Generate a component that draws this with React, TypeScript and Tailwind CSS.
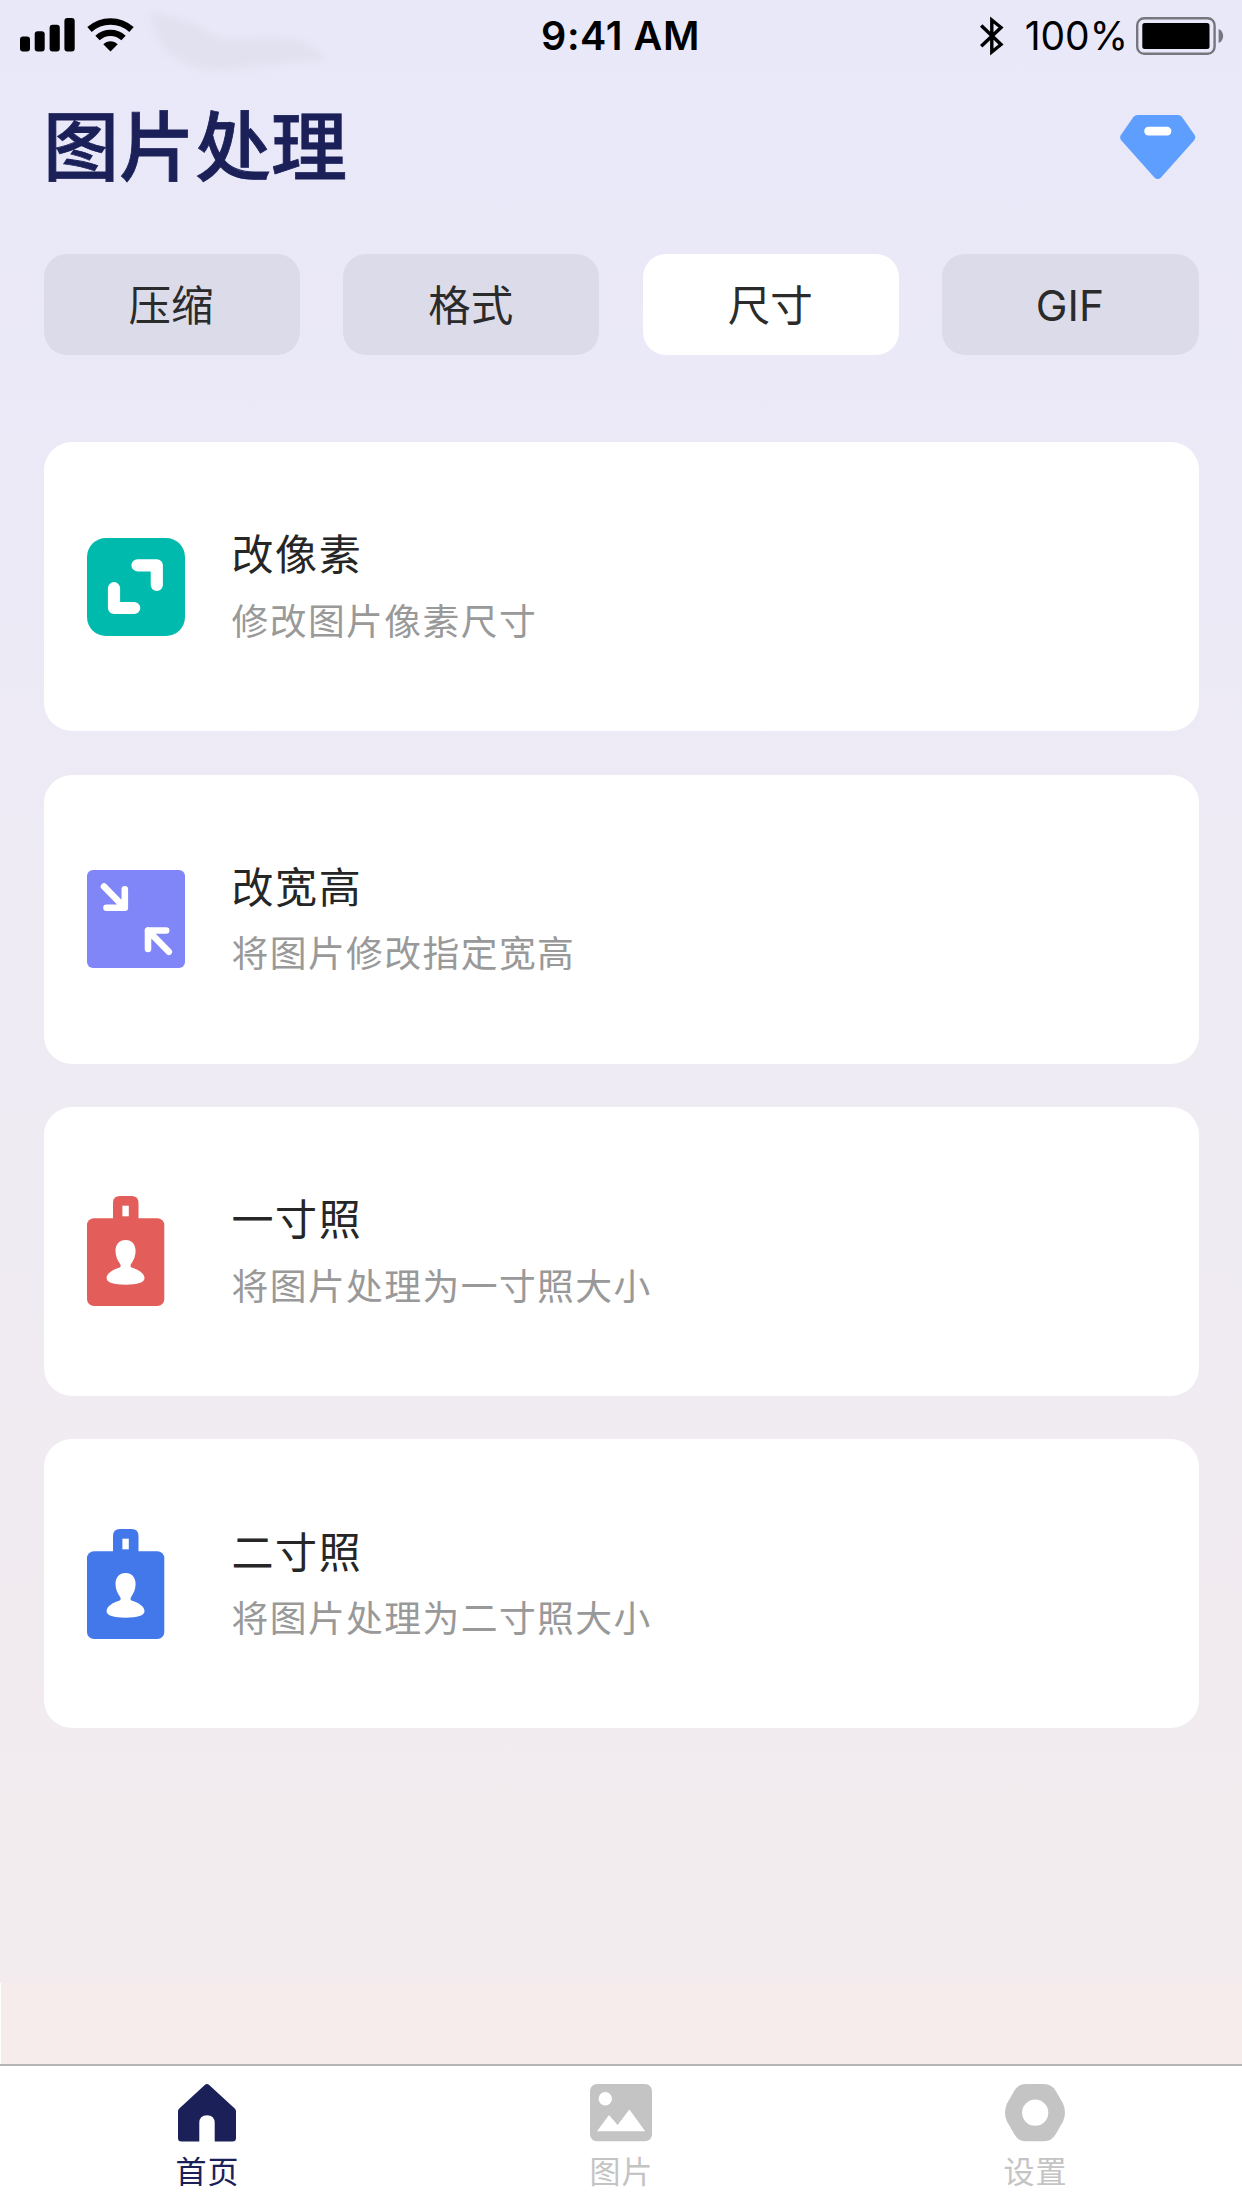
import React, { useState } from "react";
import clsx from "clsx";

//types
type ToolType = {
  id: number,
  title: string,
  description: string,
  icon: React.ReactNode,
}

type NavItemType = {
  label: string,
  icon: React.ReactNode,
}

const SignalIcon = () => (
  <svg width="55" height="34" viewBox="0 0 55 34">
    <rect x="0" y="18.5" width="10" height="15" rx="3" />
    <rect x="14.7" y="13.3" width="10" height="20.2" rx="3" />
    <rect x="29.6" y="6.8" width="10.2" height="26.7" rx="3" />
    <rect x="44.4" y="0" width="10.3" height="33.5" rx="3" />
  </svg>
);

const WifiIcon = () => (
  <svg width="47" height="34" viewBox="0 0 47 34">
    <path d="M2.5 11.5C14.5 0.8 32.5 0.8 44.5 11.5" fill="none" stroke="#000" strokeWidth="6.6" />
    <path d="M10.5 20C18 13.2 29 13.2 36.5 20" fill="none" stroke="#000" strokeWidth="6.4" />
    <path d="M16.3 26.2C20.4 22.3 26.6 22.3 30.7 26.2L23.5 33.6Z" />
  </svg>
);

const BluetoothIcon = () => (
  <svg width="24" height="40" viewBox="0 0 24 40" fill="none" stroke="#000" strokeWidth="3.4">
    <path d="M1.2 9.5L21 28.5L11.8 36V4L21 11.5L1.2 30.3" />
  </svg>
);

const BatteryIcon = () => (
  <svg width="88" height="38" viewBox="0 0 88 38">
    <rect x="1.2" y="1.2" width="77.4" height="35.6" rx="7" fill="none" stroke="#77767f" strokeWidth="2.4" />
    <rect x="6.3" y="6" width="67.2" height="26" rx="2.5" />
    <path d="M82.6 12C88.6 14 88.6 24 82.6 26Z" fill="#77767f" />
  </svg>
);

const DiamondIcon = () => (
  <svg width="76" height="65" viewBox="0 0 76 65">
    <path
      d="M17.5 0H58Q60.5 0 62 2L74.6 20Q76.2 22.8 74 25.6L41 62.4Q37.7 65.8 34.4 62.4L1.4 25.6Q-.8 22.8 .9 20L13.4 2Q15 0 17.5 0Z"
      fill="#5e9eff"
    />
    <rect x="24.2" y="11.8" width="27.2" height="8.6" rx="4.3" fill="#fff" />
  </svg>
);

const PixelIcon = () => (
  <svg width="98" height="98" viewBox="0 0 98 98">
    <rect width="98" height="98" rx="19" fill="#00baad" />
    <g fill="none" stroke="#fff" strokeWidth="12.2" strokeLinecap="round" strokeLinejoin="round">
      <path d="M50.5 27.3H69.8V47" />
      <path d="M27 50.2V70H47.2" />
    </g>
  </svg>
);

const ResizeIcon = () => (
  <svg width="98" height="98" viewBox="0 0 98 98">
    <rect width="98" height="98" rx="6" fill="#8085f7" />
    <g fill="none" stroke="#fff" strokeWidth="6.6" strokeLinecap="round" strokeLinejoin="round">
      <path d="M17 16.5L37.5 37.5M37.8 19.2V37.8H19.5" />
      <path d="M81.8 81.8L61 60.5M79.2 60.5H61V79" />
    </g>
  </svg>
);

const BadgeIcon = ({ color }: { color: string }) => (
  <svg width="78" height="110" viewBox="0 0 78 110">
    <rect y="22.3" width="77.3" height="87.7" rx="7" fill={color} />
    <path d="M26 26V7Q26 0 33 0H44.5Q51.5 0 51.5 7V26Z" fill={color} />
    <rect x="35.4" y="9.7" width="6.4" height="10.6" fill="#fff" />
    <path
      d="M38.6 44C45 44 48.6 48.5 48.6 55C48.6 60.5 46.5 64.5 44.4 67.5C43 69.6 43.2 71 45 71.7C51.5 73.5 57.5 77.5 57.5 82C57.5 86.7 50.5 88.7 38.6 88.7C26.7 88.7 19.6 86.7 19.6 82C19.6 77.5 25.7 73.5 32.2 71.7C34 71 34.2 69.6 32.8 67.5C30.7 64.5 28.5 60.5 28.5 55C28.5 48.5 32.2 44 38.6 44Z"
      fill="#fff"
    />
  </svg>
);

const HomeIcon = () => (
  <svg width="58" height="58" viewBox="0 0 58 58" fill="currentColor">
    <path d="M26.8 1Q29 -.8 31.2 1L57 24.8Q58 26 58 27.5V54Q58 57.5 54.5 57.5H36.7V39Q36.7 31.2 29 31.2Q21.3 31.2 21.3 39V57.5H3.5Q0 57.5 0 54V27.5Q0 26 1 24.8Z" />
  </svg>
);

const PictureIcon = () => (
  <svg width="62" height="58" viewBox="0 0 62 58">
    <rect width="62" height="57.3" rx="7" fill="currentColor" />
    <circle cx="15.3" cy="14.8" r="6.7" fill="#fff" />
    <path d="M7 47.2L19 31L27.6 41L39.4 25.5L55.2 47.2Z" fill="#fff" />
  </svg>
);

const SettingIcon = () => (
  <svg width="60" height="58" viewBox="0 0 60 58">
    <path
      d="M21 0H39Q46.5 0 50.5 6.5L58 19.5Q62 28.7 58 37.5L50.5 50.5Q46.5 57.3 39 57.3H21Q13.5 57.3 9.5 50.5L2 37.5Q-2 28.7 2 19.5L9.5 6.5Q13.5 0 21 0Z"
      fill="currentColor"
    />
    <circle cx="30.2" cy="28.7" r="13.1" fill="#fff" />
  </svg>
);

const tabs = ["压缩", "格式", "尺寸", "GIF"];

const tools: Array<ToolType> = [
  { id: 1, title: "改像素", description: "修改图片像素尺寸", icon: <PixelIcon /> },
  { id: 2, title: "改宽高", description: "将图片修改指定宽高", icon: <ResizeIcon /> },
  { id: 3, title: "一寸照", description: "将图片处理为一寸照大小", icon: <BadgeIcon color="#e35d5a" /> },
  { id: 4, title: "二寸照", description: "将图片处理为二寸照大小", icon: <BadgeIcon color="#4378eb" /> },
];

const navItems: Array<NavItemType> = [
  { label: "首页", icon: <HomeIcon /> },
  { label: "图片", icon: <PictureIcon /> },
  { label: "设置", icon: <SettingIcon /> },
];

const StatusBar = () => (
  <div className="relative grid h-[72px] grid-cols-3 items-center pl-5 pr-[18px] font-['Inter',sans-serif] text-black">
    <svg className="absolute left-[142px] top-0 blur-[3px]" width="200" height="80" viewBox="0 0 200 80">
      <path
        d="M8 11C28 18 50 20 64 31C76 42 94 39 122 37C152 36 170 42 184 60C150 60 112 70 72 70C38 68 14 52 8 11Z"
        fill="#e2e1ef"
      />
    </svg>
    <div className="relative -mt-[2px] flex items-center gap-3">
      <SignalIcon />
      <WifiIcon />
    </div>
    <p className="-ml-[3px] pt-[2px] text-center text-[39.5px] font-semibold leading-none tracking-[0.6px]">9:41 AM</p>
    <div className="-mt-px flex items-center justify-end">
      <BluetoothIcon />
      <p className="ml-[21px] mr-[8px] text-[39px] leading-none">100%</p>
      <BatteryIcon />
    </div>
  </div>
);

const ToolCard = ({ title, description, icon }: Omit<ToolType, "id">) => (
  <div className="flex h-[289px] items-center rounded-[28px] bg-white pl-[43px]">
    <div className="w-[145px]">{icon}</div>
    <div className="flex flex-col gap-[10.5px] pb-[2px]">
      <h3 className="text-[42px] leading-[56px] tracking-[1.6px] text-[#262626]">{title}</h3>
      <p className="text-[36.8px] leading-[56px] tracking-[1.4px] text-[#999]">{description}</p>
    </div>
  </div>
);

const App = () => {
  const [activeTab, setActiveTab] = useState("尺寸");
  const [activeNav, setActiveNav] = useState("首页");

  return (
    <div className="flex h-[2208px] w-[1242px] flex-col overflow-hidden bg-white font-['Noto_Sans_CJK_SC',sans-serif]">
      <main className="h-[1983px] bg-linear-to-b from-[#e9e8f9] via-[#eeebf4] to-[#f3ecee]">
        <StatusBar />
        <header className="flex h-[150px] items-center justify-between pl-[43px] pr-[46px]">
          <h1 className="pb-[10px] text-[76px] font-medium leading-none text-[#1b2059] [-webkit-text-stroke:0.8px_#1b2059]">图片处理</h1>
          <DiamondIcon />
        </header>
        <div className="mx-[43.5px] mt-[32.4px] grid grid-cols-4 gap-[43.5px]">
          {tabs.map((tab) => (
            <button
              key={tab}
              onClick={() => setActiveTab(tab)}
              className={clsx(
                "h-[101px] rounded-[23px] pt-px pr-px font-['Inter','Noto_Sans_CJK_SC',sans-serif] text-[42.5px] text-[#2b2b2b]",
                activeTab === tab ? "bg-white" : "bg-[#dcdbea]"
              )}
            >
              {tab}
            </button>
          ))}
        </div>
        <div className="mx-[43.5px] mt-[86.8px] flex flex-col gap-[43.4px]">
          {tools.map(({ id, title, description, icon }) => (
            <ToolCard key={id} title={title} description={description} icon={icon} />
          ))}
        </div>
      </main>
      <div className="ml-px h-[81px] bg-[#f6eceb]" />
      <nav className="grid h-[144px] grid-cols-3 border-t-2 border-[#b5b3b3] bg-white">
        {navItems.map(({ label, icon }) => (
          <button
            key={label}
            onClick={() => setActiveNav(label)}
            className={clsx(
              "flex flex-col items-center pt-[18px]",
              activeNav === label ? "text-[#1b2059]" : "text-[#c4c4c4]"
            )}
          >
            {icon}
            <span className="mt-[6px] pl-px text-[31px] leading-[44px] tracking-[1px]">{label}</span>
          </button>
        ))}
      </nav>
    </div>
  );
};

export default App;
